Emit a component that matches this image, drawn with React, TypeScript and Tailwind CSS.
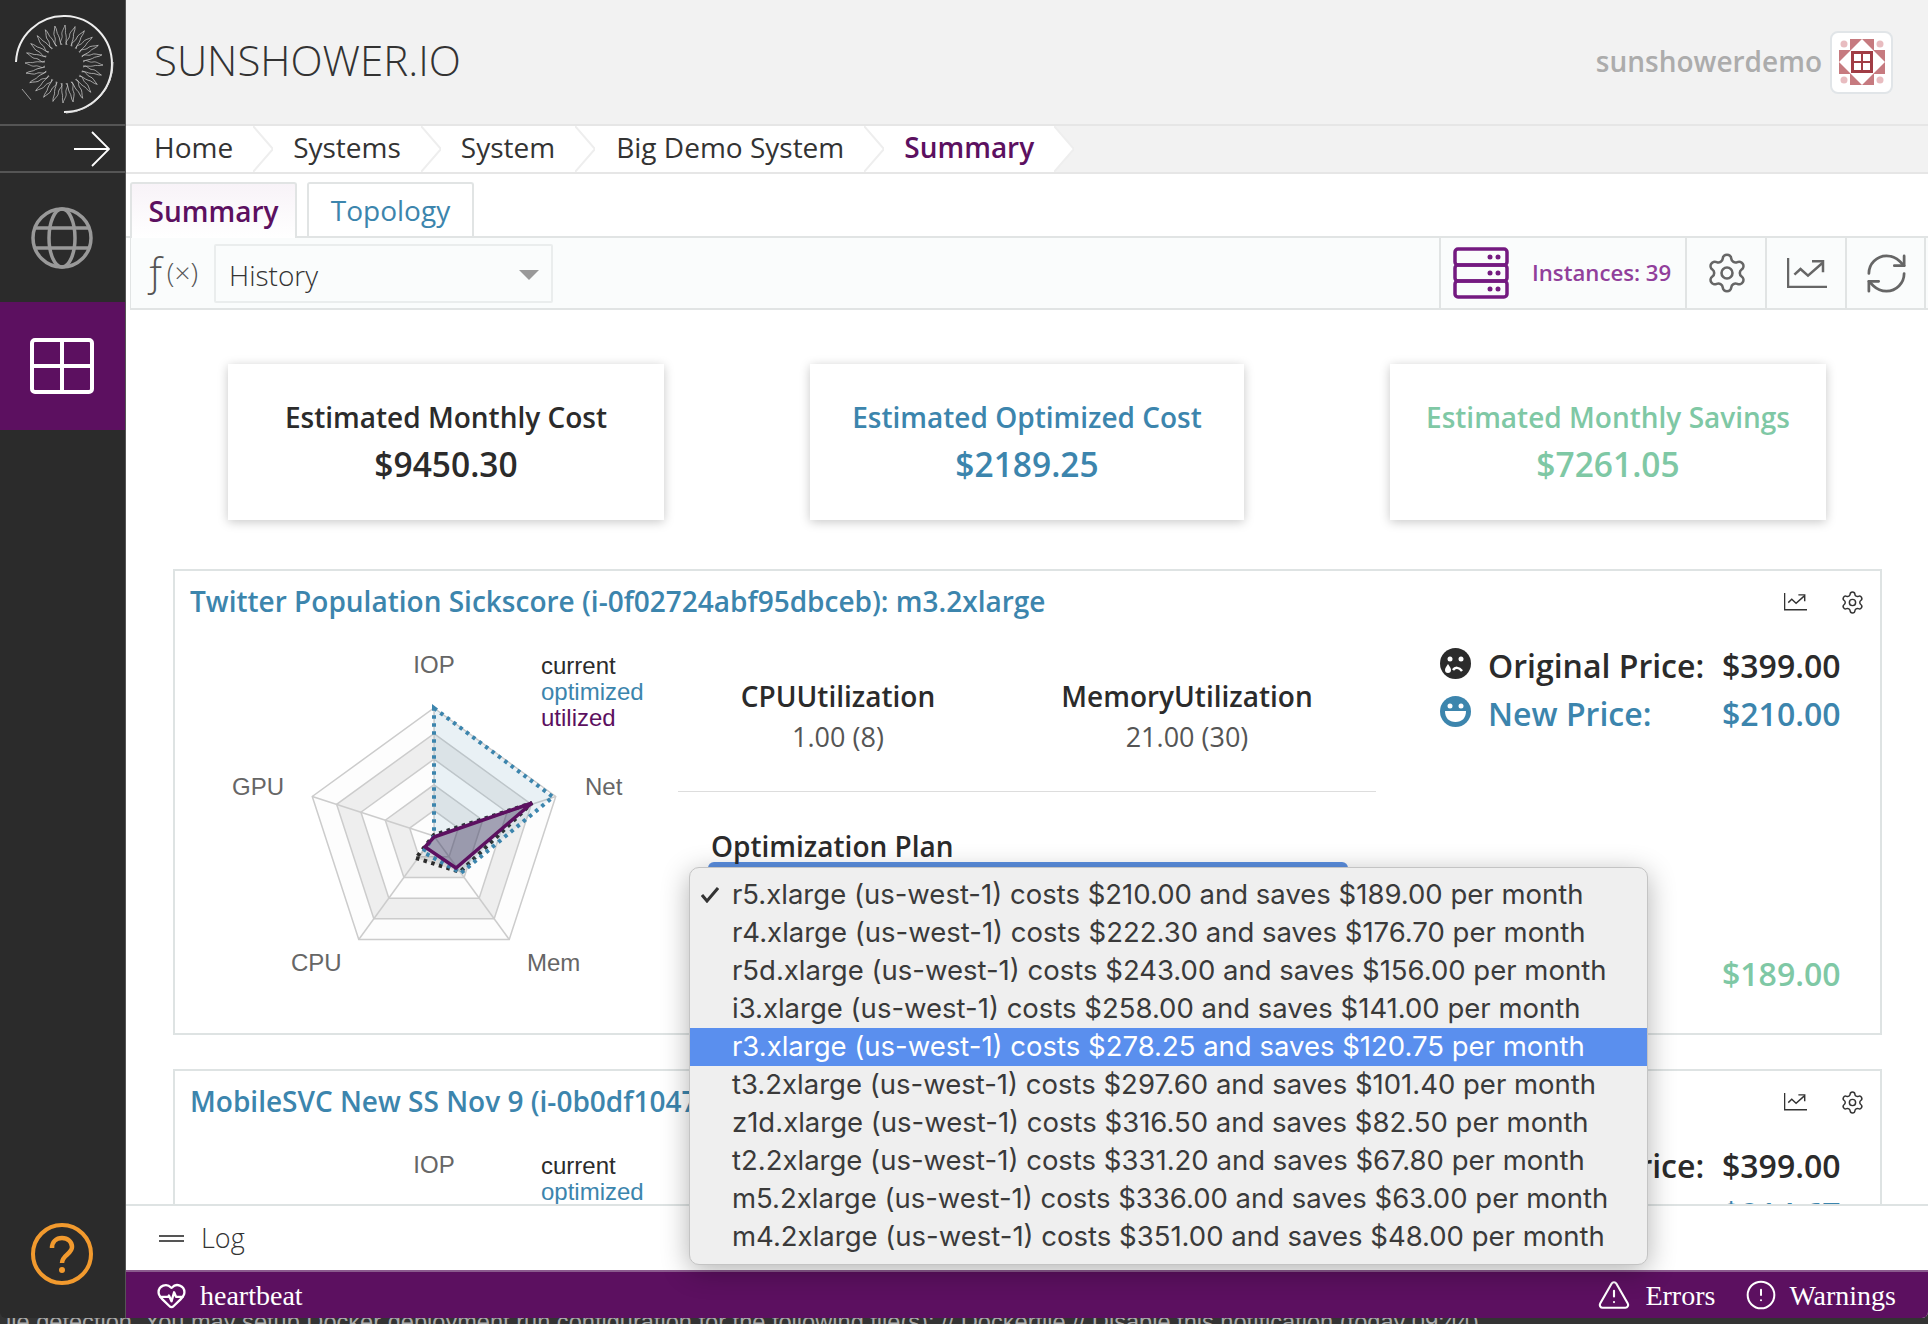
import { Settings, RefreshCw, HeartPulse, TriangleAlert, CircleAlert } from "lucide-react";

const openSans = "font-['Open_Sans',sans-serif]";

const plans = [
  "r5.xlarge (us-west-1) costs $210.00 and saves $189.00 per month",
  "r4.xlarge (us-west-1) costs $222.30 and saves $176.70 per month",
  "r5d.xlarge (us-west-1) costs $243.00 and saves $156.00 per month",
  "i3.xlarge (us-west-1) costs $258.00 and saves $141.00 per month",
  "r3.xlarge (us-west-1) costs $278.25 and saves $120.75 per month",
  "t3.2xlarge (us-west-1) costs $297.60 and saves $101.40 per month",
  "z1d.xlarge (us-west-1) costs $316.50 and saves $82.50 per month",
  "t2.2xlarge (us-west-1) costs $331.20 and saves $67.80 per month",
  "m5.2xlarge (us-west-1) costs $336.00 and saves $63.00 per month",
  "m4.2xlarge (us-west-1) costs $351.00 and saves $48.00 per month",
];

const crumbs = ["Home", "Systems", "System", "Big Demo System", "Summary"];

function Logo() {
  const rays = Array.from({ length: 24 }, (_, i) => i * 15);
  return (
    <svg width="125" height="124" viewBox="0 0 125 124" fill="none">
      <path d="M16 62 A48 48 0 1 1 64 112" stroke="#eee" strokeWidth="2" />
      <path d="M66 113 A49.500 49.500 0 0 0 113 62" stroke="#ddd" strokeWidth="1" />
      <path d="M22 89 L31 100" stroke="#bbb" strokeWidth="0.8" />
      <g transform="translate(64 64)" stroke="#c8c8c8" strokeWidth="0.7">
        {rays.map((a) => (
          <path
            key={a}
            transform={`rotate(${a})`}
            d="M-3 -19 C-5 -23 -1 -25 -2 -29 C-3 -32 0 -35 1 -39 C2.500 -35 0.500 -32 2 -29 C3 -25 1 -23 3 -19"
          />
        ))}
      </g>
    </svg>
  );
}

function Avatar() {
  return (
    <div className="ml-[8px] flex h-[63px] w-[63px] items-center justify-center rounded-[8px] border-2 border-[#e1e5e8] bg-white">
      <svg width="46" height="46" viewBox="0 0 46 46">
        <rect x="11" y="0" width="24" height="46" fill="#c67a7f" />
        <rect x="0" y="11" width="46" height="24" fill="#c67a7f" />
        <polygon points="23,0 46,23 23,46 0,23" fill="#fff" />
        <circle cx="5" cy="5" r="3.500" fill="#e8bcc0" />
        <circle cx="41" cy="5" r="3.500" fill="#e8bcc0" />
        <circle cx="5" cy="41" r="3.500" fill="#e8bcc0" />
        <circle cx="41" cy="41" r="3.500" fill="#e8bcc0" />
        <rect x="12" y="12" width="22" height="22" fill="#a13d45" />
        <rect x="15" y="15" width="7" height="7" fill="#fff" />
        <rect x="24" y="15" width="7" height="7" fill="#fff" />
        <rect x="15" y="24" width="7" height="7" fill="#fff" />
        <rect x="24" y="24" width="7" height="7" fill="#fff" />
      </svg>
    </div>
  );
}

function ChartIcon({ size, width = 2.500 }: { size: number; width?: number }) {
  return (
    <svg width={size} height={(size * 30) / 40} viewBox="0 0 40 30" fill="none" stroke="currentColor" strokeWidth={width}>
      <path d="M1 0v29h39" />
      <path d="M7.400 16.700L13.500 11L21 17.700L35.400 5" />
      <path d="M25 3.300h11v11" />
    </svg>
  );
}

function Radar() {
  const cx = 434;
  const cy = 836;
  const angles = [-90, -18, 54, 126, 198].map((d) => (d * Math.PI) / 180);
  const ring = (r: number) => angles.map((a) => `${cx + r * Math.cos(a)},${cy + r * Math.sin(a)}`).join(" ");
  return (
    <svg className="mt-[7px] block shrink-0" width="503" height="360" viewBox="175 640 503 360">
      <polygon points={ring(128)} fill="#fdfdfd" stroke="#ccc" strokeWidth="1.500" />
      <polygon points={ring(102.400)} fill="#eee" stroke="#ccc" strokeWidth="1.500" />
      <polygon points={ring(76.800)} fill="#fdfdfd" stroke="#ccc" strokeWidth="1.500" />
      <polygon points={ring(51.200)} fill="#eee" stroke="#ccc" strokeWidth="1.500" />
      <polygon points={ring(25.600)} fill="#fdfdfd" stroke="#ccc" strokeWidth="1.500" />
      {angles.map((a) => (
        <line key={a} x1={cx} y1={cy} x2={cx + 128 * Math.cos(a)} y2={cy + 128 * Math.sin(a)} stroke="#ccc" strokeWidth="1.500" />
      ))}
      <polygon points="416,858 460,872 532,803 434,835" fill="rgba(60,60,60,0.12)" stroke="#2b2b2b" strokeWidth="4" strokeDasharray="3.500 4.500" />
      <polygon points="434,708 553,797 461,873 423,852 434,836" fill="rgba(60,133,173,0.1)" stroke="#3c85ad" strokeWidth="4" strokeDasharray="3.500 4.500" />
      <polygon points="434,837 532,803 456,868 425,847" fill="rgba(60,40,90,0.32)" stroke="#5c1060" strokeWidth="3.500" />
      <g fontFamily="'Liberation Sans',sans-serif" fontSize="24">
        <text x="434" y="673" textAnchor="middle" fill="#666">IOP</text>
        <text x="232" y="795" fill="#666">GPU</text>
        <text x="585" y="795" fill="#666">Net</text>
        <text x="291" y="971" fill="#666">CPU</text>
        <text x="527" y="971" fill="#666">Mem</text>
        <text x="541" y="674" fill="#2b2b2b">current</text>
        <text x="541" y="700" fill="#3c85ad">optimized</text>
        <text x="541" y="726" fill="#5c1060">utilized</text>
      </g>
    </svg>
  );
}

function Sad() {
  return (
    <svg width="31" height="31" viewBox="0 0 31 31" className="mb-[6px]">
      <circle cx="15.500" cy="15.500" r="15.500" fill="#2b2b2b" />
      <circle cx="10" cy="11" r="2.500" fill="#fff" />
      <circle cx="21" cy="11" r="2.500" fill="#fff" />
      <path d="M13 22c2-3 6-3 9 1" fill="none" stroke="#fff" strokeWidth="2.500" />
      <path d="M8 16c-2 3-3 4-3 6a3 3 0 006 0c0-2-1-3-3-6z" fill="#fff" />
    </svg>
  );
}

function Happy() {
  return (
    <svg width="31" height="31" viewBox="0 0 31 31" className="mb-[6px]">
      <circle cx="15.500" cy="15.500" r="15.500" fill="#3c85ad" />
      <circle cx="10" cy="10" r="2.500" fill="#fff" />
      <circle cx="21" cy="10" r="2.500" fill="#fff" />
      <path d="M5 15h21c0 7-4 11-10.500 11S5 22 5 15z" fill="#fff" />
    </svg>
  );
}

function Panel({ title, newPrice, savings }: { title: string; newPrice: string; savings: string }) {
  return (
    <section className="h-[466px] w-[1709px] shrink-0 border-2 border-[#dee3e3] bg-white">
      <div className="flex h-[62px] items-center justify-between pr-[15px] pl-[15px] text-[#333]">
        <h3 className="pb-[2px] text-[28px] font-semibold whitespace-nowrap text-[#3c85ad]">{title}</h3>
        <div className="flex items-center gap-[33px]">
          <ChartIcon size={23} />
          <Settings size={25} strokeWidth={1.400} />
        </div>
      </div>
      <div className="flex">
        <Radar />
        <div className="w-[698px] shrink-0 pt-[45px]">
          <div className="grid grid-cols-[320px_378px] text-center">
            <div>
              <div className="text-[28px] leading-[36px] font-semibold text-[#2b2b2b]">CPUUtilization</div>
              <div className="mt-[5px] text-[27px] leading-[36px] text-[#555]">1.00 (8)</div>
            </div>
            <div>
              <div className="text-[28px] leading-[36px] font-semibold text-[#2b2b2b]">MemoryUtilization</div>
              <div className="mt-[5px] text-[27px] leading-[36px] text-[#555]">21.00 (30)</div>
            </div>
          </div>
          <div className="mt-[36px] h-px bg-[#ddd]" />
          <div className="mt-[38px] pl-[33px] text-[28px] leading-[32px] font-semibold text-[#2b2b2b]">Optimization Plan</div>
          <div className="ml-[30px] h-[44px] w-[640px] rounded-[6px] bg-[#5b8fe0]" />
        </div>
        <div className="ml-[64px] grid grid-cols-[48px_234px_auto] content-start pt-[9px] text-[32px] leading-[48px] font-semibold">
          <div className="flex items-center"><Sad /></div>
          <div className="text-[#2b2b2b]">Original Price:</div>
          <div className="text-[#2b2b2b]">$399.00</div>
          <div className="flex items-center"><Happy /></div>
          <div className="text-[#3c85ad]">New Price:</div>
          <div className="text-[#3c85ad]">{newPrice}</div>
          <div className="col-start-3 mt-[212px] text-[#7fc8a5]">{savings}</div>
        </div>
      </div>
    </section>
  );
}

function SummaryCard({ label, value, color, width }: { label: string; value: string; color: string; width: string }) {
  return (
    <div className={`flex h-[156px] flex-col items-center justify-center bg-white shadow-[0_2px_10px_rgba(0,0,0,0.22)] ${width} ${color}`}>
      <div className="mb-[3px] text-[28px] leading-[41px] font-semibold">{label}</div>
      <div className="text-[33.500px] leading-[46px] font-semibold">{value}</div>
    </div>
  );
}

export default function App() {
  return (
    <div className={`relative flex h-[1324px] w-full flex-col overflow-hidden bg-[#333] ${openSans}`}>
      <div className="flex h-[1318px] overflow-hidden rounded-b-[6px]">
        {/* sidebar */}
        <aside className="flex w-[126px] shrink-0 flex-col border-r border-[#555] bg-[#2b2b2b]">
          <div className="h-[124px]"><Logo /></div>
          <div className="flex h-[49px] items-center justify-end border-y-2 border-[#555] pr-[15px] text-white">
            <svg width="36" height="36" viewBox="0 0 36 36" fill="none" stroke="currentColor" strokeWidth="1.800">
              <path d="M0 18h35M18 1l17 17-17 17" />
            </svg>
          </div>
          <div className="flex h-[129px] items-center justify-center pr-[2px] text-[#999]">
            <svg width="62" height="62" viewBox="0 0 62 62" fill="none" stroke="currentColor" strokeWidth="3.500">
              <circle cx="31" cy="31" r="29" />
              <ellipse cx="31" cy="31" rx="13" ry="29" />
              <path d="M5 21h52M5 41h52" />
            </svg>
          </div>
          <div className="flex h-[128px] items-center justify-center bg-[#5c1060] pr-[2px] text-white">
            <svg width="64" height="56" viewBox="0 0 64 56" fill="none" stroke="currentColor" strokeWidth="4">
              <rect x="2" y="2" width="60" height="52" rx="3" />
              <path d="M32 2v52M2 28h60" />
            </svg>
          </div>
          <div className="mt-auto mb-[33px] flex justify-center pr-[2px] text-[#f29a2e]">
            <svg width="62" height="62" viewBox="0 0 62 62" fill="none" stroke="currentColor" strokeWidth="4">
              <circle cx="31" cy="31" r="29" />
              <path d="M21 25c0-6 4-10 10-10s10 4 10 9c0 7-10 8-10 16" strokeWidth="4.500" />
              <circle cx="31" cy="47" r="3" fill="currentColor" stroke="none" />
            </svg>
          </div>
        </aside>

        <div className="flex min-w-0 flex-1 flex-col bg-white">
          {/* header */}
          <header className="flex h-[126px] shrink-0 items-center justify-between border-b-2 border-[#e6e6e6] bg-[#f2f2f2] pr-[35px] pl-[28px]">
            <div className="pb-[5px] text-[42px] font-light text-[#333]">SUNSHOWER.IO</div>
            <div className="flex items-center">
              <span className="pb-[2px] text-[28px] font-semibold text-[#acacac]">sunshowerdemo</span>
              <Avatar />
            </div>
          </header>

          {/* breadcrumb */}
          <nav className="flex h-[48px] shrink-0 border-b-2 border-[#e6e6e6] bg-[#f2f2f2]">
            <ol className="flex items-center">
              {crumbs.map((c, i) => (
                <li key={c} className="flex h-[46px] items-center text-[28px]">
                  <div
                    className={`flex h-full items-center bg-white pr-[20px] pb-[4px] ${i === 0 ? "pl-[28px]" : i === 3 ? "pl-[21px]" : "pl-[20px]"} ${
                      i === 4 ? "font-semibold text-[#5c1060]" : "text-[#333]"
                    }`}
                  >
                    {c}
                  </div>
                  <svg className={`shrink-0 ${i < 4 ? "bg-white" : ""}`} width="20" height="46" viewBox="0 0 20 46">
                    <path d="M0 0L20 23L0 46" fill={i === 4 ? "#fff" : "none"} stroke="#eee" strokeWidth="2" />
                  </svg>
                </li>
              ))}
            </ol>
          </nav>

          {/* tabs */}
          <div className="flex h-[64px] shrink-0 items-end gap-[10px] border-b-2 border-[#e1e4e4] pl-[4px]">
            <div className="-mb-[2px] flex h-[56px] w-[167px] items-center justify-center rounded-t-[3px] border-2 border-b-0 border-[#e1e4e4] bg-gradient-to-b from-[#f8f3f8] to-white text-[28px] font-semibold text-[#5c1060]">
              Summary
            </div>
            <div className="flex h-[54px] w-[167px] items-center justify-center rounded-t-[3px] border-2 border-b-0 border-[#e1e4e4] text-[28px] text-[#3c85ad]">
              Topology
            </div>
          </div>

          {/* toolbar */}
          <div className="ml-[4px] flex h-[72px] shrink-0 items-stretch justify-between border-b-2 border-l border-[#e1e4e4] bg-[#fafcfc] pr-[2px]">
            <div className="flex items-center">
              <span className="ml-[13px] flex w-[55px] items-center pb-[6px] text-[#555]">
                <span className="text-[40px] leading-none font-light">ƒ</span>
                <span className="mt-[4px] text-[28px] leading-none font-light">(×)</span>
              </span>
              <div className="ml-[15px] flex h-[59px] w-[339px] items-center justify-between rounded-[2px] border-2 border-[#eaeded] pt-[3px] pr-[12px] pl-[13px] text-[28px] font-light text-[#333]">
                History
                <span className="h-0 w-0 border-x-[10px] border-t-[10px] border-x-transparent border-t-[#999]" />
              </div>
            </div>
            <div className="flex items-stretch text-[#666]">
              <div className="flex w-[248px] items-center border-x-2 border-[#e1e4e4] pl-[12px]">
                <svg width="56" height="52" viewBox="0 0 56 52" fill="none" stroke="#741a80" strokeWidth="3.500">
                  <rect x="2" y="2" width="52" height="16" rx="3" />
                  <rect x="2" y="18" width="52" height="16" rx="3" />
                  <rect x="2" y="34" width="52" height="16" rx="3" />
                  <g fill="#741a80" stroke="none">
                    <circle cx="37" cy="10" r="2.500" /><circle cx="45" cy="10" r="2.500" />
                    <circle cx="37" cy="26" r="2.500" /><circle cx="45" cy="26" r="2.500" />
                    <circle cx="37" cy="42" r="2.500" /><circle cx="45" cy="42" r="2.500" />
                  </g>
                </svg>
                <span className="ml-[23px] text-[22.200px] font-semibold whitespace-nowrap text-[#913f9b]">Instances: 39</span>
              </div>
              <div className="flex w-[80px] items-center justify-center border-r-2 border-[#e1e4e4] pl-[2px]">
                <Settings size={44} strokeWidth={1.400} />
              </div>
              <div className="flex w-[80px] items-center justify-center border-r-2 border-[#e1e4e4] pl-[2px]">
                <ChartIcon size={40} />
              </div>
              <div className="flex w-[79px] items-center justify-center border-r-2 border-[#e1e4e4] pl-[2px]">
                <RefreshCw size={47} strokeWidth={1.400} />
              </div>
            </div>
          </div>

          {/* scrolling content */}
          <main className="flex min-h-0 flex-1 flex-col overflow-hidden bg-white pl-[47px]">
            <div className="mt-[54px] mb-[49px] flex gap-[146px] pl-[55px]">
              <SummaryCard label="Estimated Monthly Cost" value="$9450.30" color="text-[#2b2b2b]" width="w-[436px]" />
              <SummaryCard label="Estimated Optimized Cost" value="$2189.25" color="text-[#3c85ad]" width="w-[434px]" />
              <SummaryCard label="Estimated Monthly Savings" value="$7261.05" color="text-[#7fc8a5]" width="w-[436px]" />
            </div>
            <div className="flex flex-col gap-[34px]">
              <Panel title="Twitter Population Sickscore (i-0f02724abf95dbceb): m3.2xlarge" newPrice="$210.00" savings="$189.00" />
              <Panel title="MobileSVC New SS Nov 9 (i-0b0df1047" newPrice="$214.67" savings="$184.33" />
            </div>
          </main>

          {/* log */}
          <div className="flex h-[66px] shrink-0 items-center border-t-2 border-[#dee3e3] bg-white pl-[33px] text-[#333]">
            <span className="flex w-[25px] flex-col gap-[3px]">
              <span className="h-[2px] bg-[#555]" />
              <span className="h-[2px] bg-[#555]" />
            </span>
            <span className="ml-[17px] text-[27px] font-light">Log</span>
          </div>

          {/* status bar */}
          <footer className="flex h-[48px] shrink-0 items-center justify-between border-t-2 border-[#8a5a8d] bg-[#5c1060] pr-[32px] pl-[30px] font-['Liberation_Serif',serif] text-[28px] text-white">
            <div className="flex items-center">
              <HeartPulse size={31} strokeWidth={1.800} />
              <span className="ml-[13px] pt-[2px]">heartbeat</span>
            </div>
            <div className="flex items-center">
              <TriangleAlert size={34} strokeWidth={1.500} />
              <span className="ml-[14px] pt-[2px]">Errors</span>
              <CircleAlert size={32} strokeWidth={1.500} className="ml-[30px]" />
              <span className="ml-[12px] pt-[2px]">Warnings</span>
            </div>
          </footer>
        </div>
      </div>

      {/* IDE notification peeking below the window */}
      <div className="h-[6px] overflow-hidden pl-[6px] font-['Liberation_Sans',sans-serif] text-[23.600px] leading-[9px] whitespace-nowrap text-[#aaa]">
        ile detection. You may setup Docker deployment run configuration for the following file(s): // Dockerfile // Disable this notification (today 09:44)
      </div>

      {/* native select menu */}
      <ul className="absolute top-[867px] left-[689px] w-[959px] rounded-[10px] border border-[#c4c4c4] bg-[#efefef] pt-[8px] pb-[8px] font-['Inter',sans-serif] text-[27.500px] text-[#3a3a3a] shadow-[0_6px_28px_rgba(0,0,0,0.3)]">
        {plans.map((p, i) => (
          <li key={p} className={`relative flex h-[38px] items-center pb-[1px] pl-[42px] whitespace-nowrap ${i === 4 ? "bg-[#5a8fee] text-white" : ""}`}>
            {i === 0 && (
              <svg className="absolute top-[11px] left-[11px]" width="18" height="16" viewBox="0 0 18 16" fill="none" stroke="#333" strokeWidth="3">
                <path d="M1 8l5 6L17 1" />
              </svg>
            )}
            {p}
          </li>
        ))}
      </ul>
    </div>
  );
}
